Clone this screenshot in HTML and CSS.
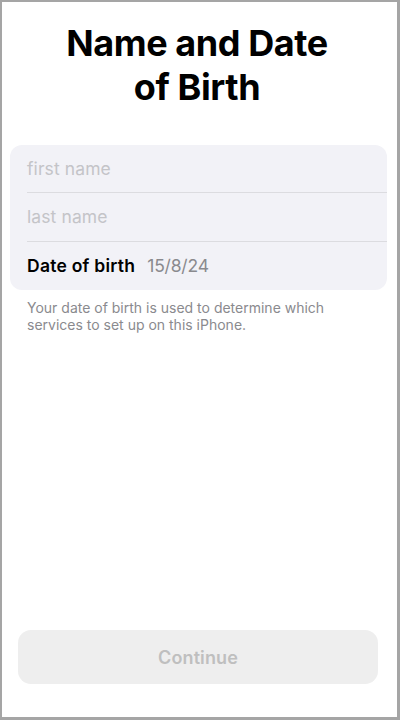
FILE: index.html
```html
<!DOCTYPE html>
<html lang="en">
<head>
<meta charset="utf-8">
<title>Name and Date of Birth</title>
<link rel="stylesheet" href="styles.css">
</head>
<body>
<div class="screen">
  <h1 class="title">Name and Date<br>of Birth</h1>
  <div class="card">
    <div class="row row-sep"><span class="placeholder">first name</span></div>
    <div class="row row-sep"><span class="placeholder">last name</span></div>
    <div class="row"><span class="label">Date of birth</span><span class="value">15/8/24</span></div>
  </div>
  <p class="note">Your date of birth is used to determine which services to set up on this iPhone.</p>
  <button class="continue" type="button">Continue</button>
</div>
</body>
</html>
```
FILE: styles.css
```css
html, body {
  margin: 0;
  padding: 0;
  background: #ffffff;
}
body {
  font-family: Inter, "Noto Sans", "Liberation Sans", sans-serif;
  -webkit-font-smoothing: antialiased;
}
.screen {
  box-sizing: border-box;
  width: 400px;
  height: 720px;
  border-style: solid;
  border-color: #a5a5a5;
  border-width: 2px 3px 3px 2px;
  display: flex;
  flex-direction: column;
  padding: 19px 10px 33px 8px;
}
.title {
  margin: 0;
  text-align: center;
  font-size: 36px;
  line-height: 44px;
  font-weight: 700;
  letter-spacing: -0.4px;
  color: #000;
  padding-right: 3px;
}
.card {
  margin-top: 36px;
  background: #f2f2f7;
  border-radius: 12px;
  padding-left: 17px;
}
.row {
  height: 48px;
  display: flex;
  align-items: center;
  font-size: 17.5px;
  letter-spacing: 0.1px;
}
.row-sep {
  box-sizing: border-box;
  border-bottom: 1px solid #dcdce0;
  height: 48.3px;
}
.placeholder {
  color: #c4c4c8;
}
.label {
  font-weight: 600;
  color: #000;
  letter-spacing: 0.25px;
}
.value {
  margin-left: 12px;
  color: #8a8a8e;
  letter-spacing: -0.2px;
}
.note {
  margin: 9px 0 0 17px;
  font-size: 14px;
  line-height: 17.3px;
  letter-spacing: 0;
  color: #8a8a8e;
  padding-right: 50px;
}
.continue {
  margin: auto 9px 0 8px;
  height: 54px;
  border: none;
  border-radius: 13px;
  background: #eeeeee;
  color: #bfbfbf;
  font-family: inherit;
  font-size: 18px;
  font-weight: 600;
  letter-spacing: 0.1px;
}
```
